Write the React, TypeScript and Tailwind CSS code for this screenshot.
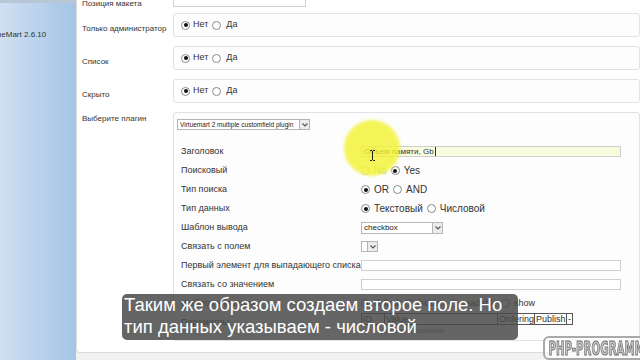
import React from "react";

function Radio({ on = false, faded = false }: { on?: boolean; faded?: boolean }) {
  return (
    <span
      className={`relative inline-flex h-[9px] w-[9px] shrink-0 items-center justify-center rounded-full border bg-white ${
        faded ? "border-[#c9c9a0]" : "border-[#8a8a8a]"
      }`}
    >
      {on && <span className="h-[4px] w-[4px] rounded-full bg-[#111]" />}
    </span>
  );
}

function YesNo() {
  return (
    <div className="flex items-center gap-[3px] text-[9px] text-[#333]">
      <Radio on />
      <span className="mr-[1px]">Нет</span>
      <Radio />
      <span className="ml-[2px]">Да</span>
    </div>
  );
}

function Arrow() {
  return (
    <span className="flex h-full w-[10px] items-center justify-center border-l border-[#b5b5b5] bg-[#ececec]">
      <svg width="6" height="4" viewBox="0 0 6 4" aria-hidden>
        <path d="M0.5 0.5 3 3 5.5 0.5" fill="none" stroke="#555" strokeWidth="1.1" />
      </svg>
    </span>
  );
}

function Box({ children, className = "" }: { children: React.ReactNode; className?: string }) {
  return (
    <div className={`rounded-[3px] border border-[#e2e2e2] bg-[#fdfdfd] ${className}`}>{children}</div>
  );
}

function Row({ label, children }: { label: string; children?: React.ReactNode }) {
  return (
    <div className="flex h-[19px] items-center">
      <div className="w-[180px] shrink-0 whitespace-nowrap text-[9px] text-[#333]">{label}</div>
      <div className="flex flex-1 items-center whitespace-nowrap">{children}</div>
    </div>
  );
}

export default function App() {
  return (
    <div className="relative flex h-[360px] w-[640px] overflow-hidden bg-[#f2f2f2] font-['Liberation_Sans',Arial,sans-serif]">
      {/* sidebar */}
      <aside className="h-full w-[76px] shrink-0 border-t-[3px] border-[#b8c7d6] bg-gradient-to-r from-[#cfe0f2] to-[#a5c4e7]">
        <div className="ml-[-15px] mt-[26px] whitespace-nowrap text-[8px] text-[#333]">VirtueMart 2.6.10</div>
      </aside>

      {/* main panel */}
      <main className="h-[353px] flex-1 overflow-hidden rounded-bl-[4px] border-b border-l border-[#dcdcdc] bg-white pl-[5px]">
        <div className="mt-[-10px] flex flex-col">
          {/* Позиция макета */}
          <div className="flex h-[17px]">
            <div className="w-[91px] shrink-0 pt-[8px] text-[8px] text-[#333]">Позиция макета</div>
            <div className="h-[17px] w-[133px] border border-[#d0d0d0] bg-white" />
          </div>

          <div className="mt-[6px] flex h-[24px]">
            <div className="w-[91px] shrink-0 pt-[10px] text-[8px] text-[#333]">Только администратор</div>
            <Box className="flex flex-1 items-center pl-[7px]">
              <YesNo />
            </Box>
          </div>

          <div className="mt-[9px] flex h-[24px]">
            <div className="w-[91px] shrink-0 pt-[10px] text-[8px] text-[#333]">Список</div>
            <Box className="flex flex-1 items-center pl-[7px]">
              <YesNo />
            </Box>
          </div>

          <div className="mt-[9px] flex h-[24px]">
            <div className="w-[91px] shrink-0 pt-[10px] text-[8px] text-[#333]">Скрыто</div>
            <Box className="flex flex-1 items-center pl-[7px]">
              <YesNo />
            </Box>
          </div>

          <div className="mt-[9px] flex">
            <div className="w-[91px] shrink-0 pt-[1px] text-[8px] text-[#333]">Выберите плагин</div>
            <Box className="h-[229px] flex-1 pl-[3px] pt-[6px]">
              <div className="flex h-[11px] w-[133px] items-center border border-[#b5b5b5] bg-white text-[6.5px] text-[#222]">
                <span className="flex-1 overflow-hidden whitespace-nowrap pl-[2px]">Virtuemart 2 multiple customfield plugin</span>
                <Arrow />
              </div>

              <div className="mt-[12px] flex flex-col pl-[4px]">
                <Row label="Заголовок">
                  <div className="flex h-[11px] w-[260px] items-center border border-[#cfcfcf] bg-[#f8fcdf] pl-[2px] text-[8px] text-[#333]">
                    Объем памяти, Gb
                    <span className="ml-[1px] h-[9px] w-px bg-[#333]" />
                  </div>
                </Row>
                <Row label="Поисковый">
                  <div className="flex items-center gap-[4px] text-[10px] text-[#333]">
                    <Radio faded />
                    <span className="text-[#b8b890]">No</span>
                    <Radio on />
                    <span>Yes</span>
                  </div>
                </Row>
                <Row label="Тип поиска">
                  <div className="flex items-center gap-[4px] text-[10px] text-[#333]">
                    <Radio on />
                    <span>OR</span>
                    <Radio />
                    <span>AND</span>
                  </div>
                </Row>
                <Row label="Тип данных">
                  <div className="flex items-center gap-[4px] text-[10px] text-[#333]">
                    <Radio on />
                    <span>Текстовый</span>
                    <Radio />
                    <span>Числовой</span>
                  </div>
                </Row>
                <Row label="Шаблон вывода">
                  <div className="flex h-[12px] w-[82px] items-center border border-[#b5b5b5] bg-white text-[8px] text-[#222]">
                    <span className="flex-1 pl-[2px]">checkbox</span>
                    <Arrow />
                  </div>
                </Row>
                <Row label="Связать с полем">
                  <div className="flex h-[11px] w-[17px] items-center border border-[#b5b5b5] bg-white">
                    <span className="flex-1" />
                    <Arrow />
                  </div>
                </Row>
                <Row label="Первый элемент для выпадающего списка">
                  <div className="h-[11px] w-[260px] border border-[#cfcfcf] bg-white" />
                </Row>
                <Row label="Связать со значением">
                  <div className="h-[11px] w-[260px] border border-[#cfcfcf] bg-white" />
                </Row>
                <Row label="Шаблон значения">
                  <div className="flex items-center gap-[4px] text-[9px] text-[#333]">
                    <Radio on />
                    <span>default</span>
                    <Radio />
                    <span>hidden</span>
                    <Radio />
                    <span>readable</span>
                    <Radio />
                    <span>show</span>
                  </div>
                </Row>
                <div className="flex h-[19px] items-start">
                  <div className="w-[180px] shrink-0 pt-[3px] text-[9px] text-[#333]">Параметры</div>
                  <div className="flex flex-col">
                    <div className="flex h-[12px] border border-[#555] text-[9px] leading-[10px] text-[#333]">
                      <span className="w-[23px] border-r border-[#555] pl-[1px]">ID</span>
                      <span className="w-[113px] border-r border-[#555] pl-[1px]">Value</span>
                      <span className="w-[37px] border-r border-[#555] pl-[1px]">Ordering</span>
                      <span className="w-[32px] border-r border-[#555] pl-[1px]">Publish</span>
                      <span className="w-[5px] pl-[1px]">-</span>
                    </div>
                    <div className="mt-[1px] pl-[20px] text-[7px] text-[#888]">Добавить значения</div>
                  </div>
                </div>
              </div>
            </Box>
          </div>
        </div>
      </main>

      {/* pointer highlight */}
      <div className="absolute left-[344px] top-[120px] h-[56px] w-[56px] rounded-full bg-[#f3f331]/80 blur-[1.5px]" />
      <svg className="absolute left-[369px] top-[150px]" width="7" height="11" viewBox="0 0 7 11" aria-hidden>
        <path d="M1 0.5h2M4 0.5h2M3.5 1v9M1 10.5h2M4 10.5h2" fill="none" stroke="#222" strokeWidth="1" />
      </svg>

      {/* subtitle */}
      <div className="absolute left-[122px] top-[294px] h-[46px] w-[396px] whitespace-nowrap rounded-[5px] bg-[#4a4a4a]/85 px-[2px] text-[18.5px] leading-[22px] text-white">
        <div>Таким же образом создаем второе поле. Но</div>
        <div>тип данных указываем - числовой</div>
      </div>

      {/* watermark */}
      <div className="absolute left-[543px] top-[336px] h-[24px] w-[110px] overflow-hidden rounded-[6px] border-2 border-[#a9a9a9] bg-white/60">
        <div className="origin-left scale-x-[0.57] whitespace-nowrap pl-[6px] text-[20px] font-bold leading-[20px] text-[#c4c4c4] [-webkit-text-stroke:1px_#6f6f6f] font-['DejaVu_Sans_Condensed','DejaVu_Sans',sans-serif]">
          PHP-PROGRAMMING
        </div>
      </div>
    </div>
  );
}
